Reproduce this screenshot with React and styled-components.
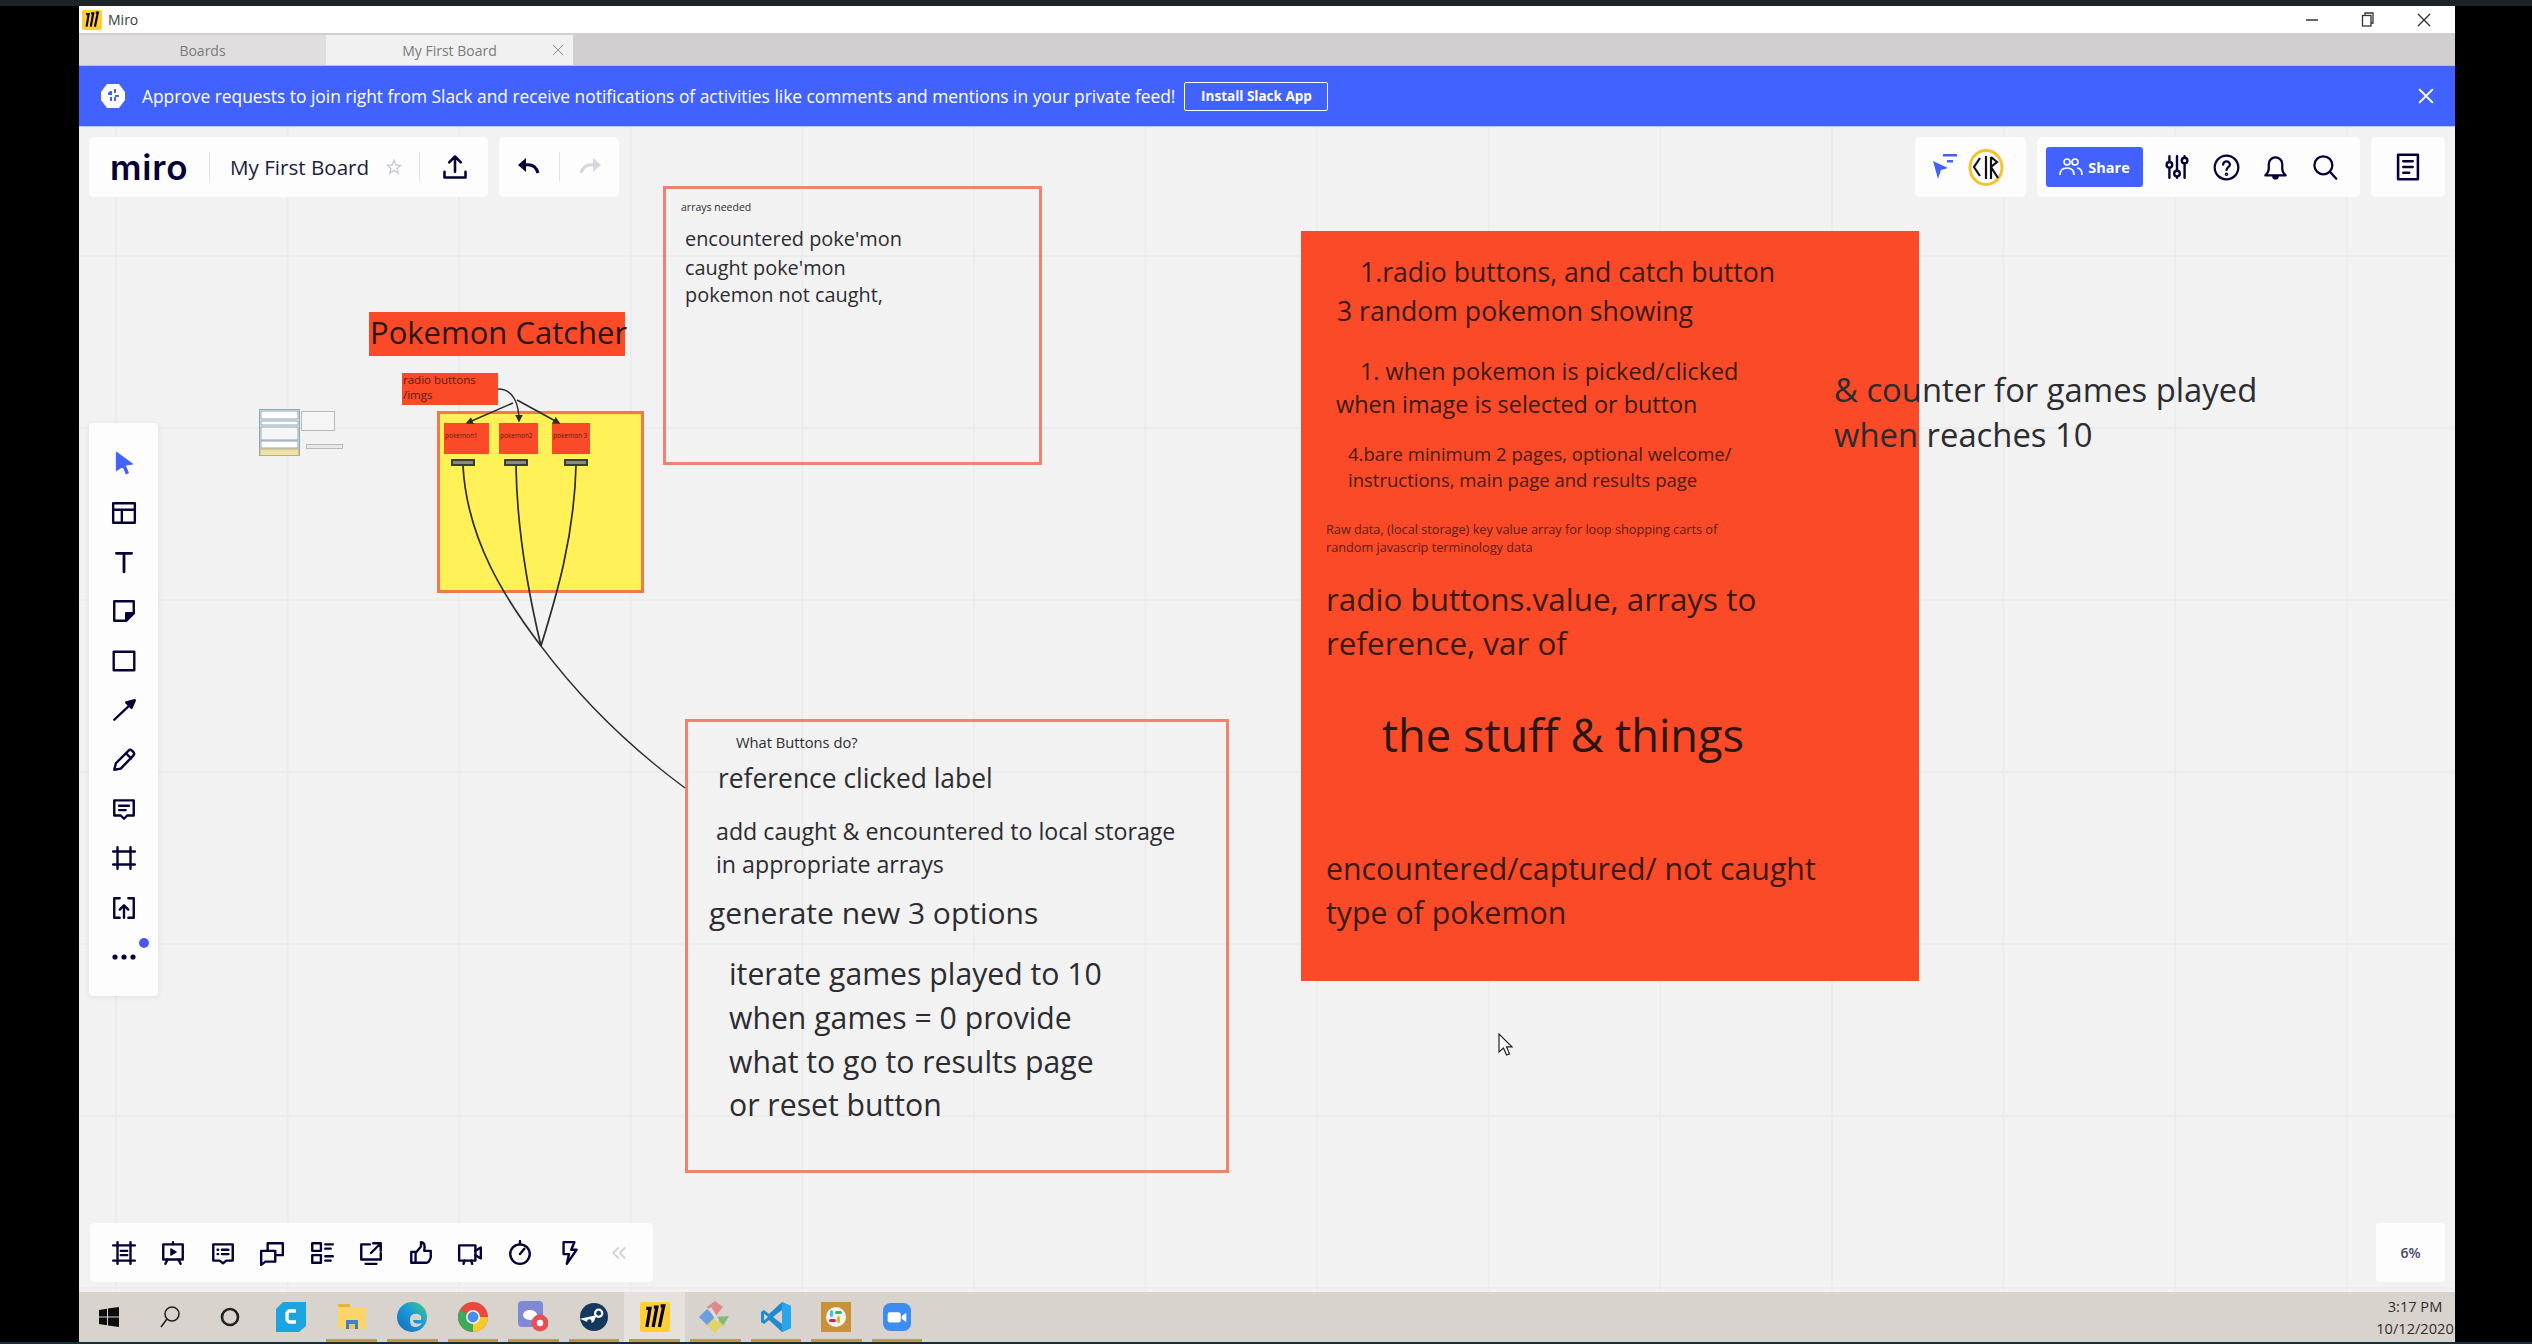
import React from "react";
import styled, { createGlobalStyle } from "styled-components";

const ORIGIN_X = 79;
const ORIGIN_Y = 127;
const INK = "#050038";
const FONT = '"Open Sans", "Liberation Sans", sans-serif';

const Global = createGlobalStyle`
  html, body { margin: 0; padding: 0; background: #000; overflow: hidden; }
  * { box-sizing: border-box; }
  body { font-family: ${FONT}; }
`;

const Page = styled.div`
  width: 2532px; height: 1344px; background: #000;
  display: flex; flex-direction: column; overflow: hidden;
`;
const TopStrip = styled.div`height: 6px; background: #202326; flex: none;`;
const BottomStrip = styled.div`
  height: 2px; flex: none; background: #12303c; margin-top: 0;
`;
const Window = styled.div`
  width: 2376px; margin-left: 79px; height: 1336px;
  display: flex; flex-direction: column; flex: none; background: #fff;
`;
const TitleBar = styled.div`
  height: 29px; background: #fff; flex: none; display: flex; align-items: center;
  padding-left: 3px; border-bottom: 2px solid #cfcfcf; position: relative;
`;
const AppName = styled.span`
  font-size: 14px; color: #3a3a3a; margin-left: 6px;
`;
const WinControls = styled.div`
  margin-left: auto; display: flex; align-items: center; gap: 42px; padding-right: 24px;
`;
const TabBar = styled.div`
  height: 31px; background: #d1cfd0; flex: none; display: flex;
  border-bottom: 1px solid #b9bdd0;
`;
const Tab = styled.div`
  width: ${(p) => p.$w}px; display: flex; align-items: center; justify-content: center;
  position: relative; font-size: 14px; color: #7a7a7a;
  background: ${(p) => (p.$active ? "#f1f1f2" : "#e0dedf")};
`;
const TabClose = styled.span`
  position: absolute; right: 8px; top: 9px; width: 13px; height: 13px; display: flex;
`;
const Banner = styled.div`
  height: 61px; background: #4262ff; flex: none; display: flex; align-items: center;
  padding-left: 22px; color: #fff; border-bottom: 1px solid #b8c4f5;
`;
const BannerText = styled.span`
  font-size: 17.38px; font-weight: 500; margin-left: 17px; white-space: nowrap;
`;
const InstallButton = styled.div`
  margin-left: 9px; height: 29px; width: 144px; border: 1.5px solid #fff; border-radius: 2px;
  display: flex; align-items: center; justify-content: center; font-size: 13.5px; font-weight: 700;
`;
const BannerClose = styled.span`margin-left: auto; margin-right: 21px; display: flex;`;

const Canvas = styled.div`
  flex: 1; position: relative; overflow: hidden;
  background-color: #f2f2f3;
  background-image:
    linear-gradient(to right, #ececee 2px, transparent 2px),
    linear-gradient(to bottom, #ececee 2px, transparent 2px);
  background-size: 171.6px 172px;
  background-position: 36px 128px;
`;
const Frame = styled.div`
  position: absolute;
  left: ${(p) => p.$x - ORIGIN_X}px; top: ${(p) => p.$y - ORIGIN_Y}px;
  width: ${(p) => p.$w}px; height: ${(p) => p.$h}px;
  background: ${(p) => p.$bg || "transparent"};
  border: ${(p) => (p.$border ? `${p.$bw || 3}px solid ${p.$border}` : "none")};
`;
const Scribble = styled.div`
  position: absolute; white-space: nowrap;
  left: ${(p) => p.$x - ORIGIN_X}px; top: ${(p) => p.$cy - ORIGIN_Y - p.$lh / 2 - 2}px;
  font-size: ${(p) => p.$size}px; line-height: ${(p) => p.$lh}px;
  color: ${(p) => p.$color || "#2c2c30"};
`;
const Wires = styled.svg`position: absolute; left: 0; top: 0; overflow: visible;`;

const Panel = styled.div`
  height: 60px; background: #fdfdfe; border-radius: 5px; display: flex; align-items: center;
  width: ${(p) => p.$w}px; padding-left: ${(p) => p.$pad || 0}px;
`;
const TopLeft = styled.div`position: absolute; left: 10px; top: 10px; display: flex; gap: 11px;`;
const TopRight = styled.div`position: absolute; left: 1836px; top: 10px; display: flex; gap: 11px;`;
const Logo = styled.span`
  font-family: Inter, "Liberation Sans", sans-serif; font-size: 35px; font-weight: 600;
  color: ${INK}; width: 78px; letter-spacing: 0.8px; line-height: 1;
`;
const Divider = styled.span`
  width: 1px; height: 30px; background: #e4e4e8; margin: 0 ${(p) => p.$r}px 0 ${(p) => p.$l}px; flex: none;
`;
const BoardName = styled.span`
  font-size: 20.6px; font-weight: 500; color: #1c1c3a; width: 155px; margin-left: -1px; white-space: nowrap;
`;
const Slot = styled.span`
  width: ${(p) => p.$w}px; height: ${(p) => p.$h || 49.4}px; display: flex;
  align-items: center; justify-content: center; flex: none; position: relative;
`;
const ShareButton = styled.div`
  width: 97px; height: 40px; background: #4262ff; border-radius: 3px; color: #fff;
  font-size: 14.5px; font-weight: 700; display: flex; align-items: center; justify-content: center; gap: 5px;
  margin-right: 9px;
`;
const LeftTools = styled.div`
  position: absolute; left: 10px; top: 296px; width: 69px; height: 573px;
  background: #fdfdfe; border-radius: 4px; box-shadow: 0 1px 6px rgba(5,0,56,.08);
  display: flex; flex-direction: column; align-items: center; padding-top: 15.5px;
`;
const Dot = styled.span`
  position: absolute; left: 50px; top: 6px; width: 10px; height: 10px; border-radius: 50%; background: #4a58f5;
`;
const BottomTools = styled.div`
  position: absolute; left: 11px; top: 1096px; width: 563px; height: 59px;
  background: #fdfdfe; border-radius: 5px; display: flex; align-items: center; padding-left: 9px;
`;
const Zoom = styled.div`
  position: absolute; left: 2297px; top: 1096px; width: 69px; height: 59px; background: #fdfdfe;
  border-radius: 4px; display: flex; align-items: center; justify-content: center;
  font-size: 14px; font-weight: 600; color: #47476a;
`;
const Pointer = styled.svg`
  position: absolute; left: ${1498 - ORIGIN_X}px; top: ${1033 - ORIGIN_Y}px;
`;
const Taskbar = styled.div`
  height: 50px; background: #d8d3cd; flex: none; display: flex; position: relative;
`;
const TaskCell = styled.div`
  width: 60.6px; height: 50px; display: flex; align-items: center; justify-content: center; flex: none;
  position: relative;
  background: ${(p) => (p.$current ? "#e6e1dc" : "transparent")};
  ${(p) => p.$running && `&::after{content:"";position:absolute;left:5px;right:5px;bottom:0;height:3px;background:#c2974a;}`}
`;
const Clock = styled.div`
  margin-left: auto; width: 80px; display: flex; flex-direction: column; align-items: center;
  justify-content: center; gap: 4px; font-size: 14.6px; color: #2e2e2e; line-height: 18px; white-space: nowrap;
`;

/* ---------- icons ---------- */
const Ic = ({ s = 26, w = 2.2, c = INK, children, vb = "0 0 24 24" }) => (
  <svg width={s} height={s} viewBox={vb} fill="none" stroke={c} strokeWidth={w} strokeLinecap="round" strokeLinejoin="round">
    {children}
  </svg>
);
const XMark = ({ s = 14, c = "#333", w = 1.4 }) => (
  <svg width={s} height={s} viewBox="0 0 14 14" stroke={c} strokeWidth={w}><path d="M1 1l12 12M13 1L1 13" /></svg>
);
const MiroMark = ({ s = 20 }) => (
  <svg width={s} height={s} viewBox="0 0 24 24">
    <rect width="24" height="24" rx="2" fill="#ffd02f" />
    <g stroke="#050038" strokeWidth="2.6" fill="none" strokeLinecap="butt">
      <path d="M5 5h3l-2.5 15" />
      <path d="M11 4h2.5L10.5 20" />
      <path d="M16.5 3h2.5L15.5 20" />
    </g>
  </svg>
);

const tools = [
  <Ic key="a"><path d="M5 2l15 11-7 1 3 7-2 1-3-7-6 4z" fill="#4262ff" stroke="#4262ff" strokeWidth="1" /></Ic>,
  <Ic key="b"><rect x="2" y="3" width="20" height="18" /><path d="M2 9h20M10 9v12" /></Ic>,
  <Ic key="c"><path d="M5 4h14M12 4v17" strokeWidth="2.6" /></Ic>,
  <Ic key="d"><path d="M3 3h18v11l-7 7H3z" /><path d="M21 14h-7v7z" fill={INK} /></Ic>,
  <Ic key="e"><rect x="2.5" y="3.5" width="19" height="17" /></Ic>,
  <Ic key="f"><path d="M3 21L20 5" /><path d="M22 3l-8 2 5 5z" fill={INK} /></Ic>,
  <Ic key="g"><path d="M3 21l1.5-6L16 3.5a2.5 2.5 0 013.5 0l1 1a2.5 2.5 0 010 3.5L9 20z" /><path d="M14 6l4.5 4.5" /></Ic>,
  <Ic key="h"><path d="M3 4h18v14h-6l-3 3-3-3H3z" /><path d="M7.5 9h9M7.5 13h6" /></Ic>,
  <Ic key="i"><path d="M2 6h20M2 18h20M6 2v20M18 2v20" /></Ic>,
  <Ic key="j"><path d="M8 3H3v18h5M16 3h5v18h-5M12 21V10M8 13.5L12 9.5l4 4" /></Ic>,
];

const bottomTools = [
  <Ic key="1"><path d="M2 5h20M2 19h20M6 2v20M18 2v20M9 10h6M9 14h6" /></Ic>,
  <Ic key="2"><rect x="3" y="4" width="18" height="14" /><path d="M12 2v2M7 18l-2 4M17 18l2 4" /><path d="M10 8l5 3-5 3z" fill={INK} strokeWidth="1" /></Ic>,
  <Ic key="3"><path d="M3 4h18v15h-6l-3 2.5L9 19H3z" /><path d="M7 9h.5M11 9h6M7 13h.5M11 13h6" /></Ic>,
  <Ic key="4"><path d="M2 10h13v10H6l-4 3zM8 10V3h14v11h-6" /></Ic>,
  <Ic key="5"><rect x="3" y="3" width="8" height="7" /><rect x="3" y="14" width="8" height="7" /><path d="M15 4h7M15 8h5M15 15h7M15 19h5" /></Ic>,
  <Ic key="6"><path d="M11 4H3v14h18v-6M7 22h10M14 3h7v7M21 3l-9 9" /></Ic>,
  <Ic key="7"><path d="M3 11h4v10H3zM7 12l5-6V2c3 0 4 3 3 8h6v6c-1 3-2 5-4 5H7" /></Ic>,
  <Ic key="8"><rect x="2" y="5" width="15" height="14" /><path d="M17 10l5-3v10l-5-3M7 19l-1 3M13 19l1 3" /></Ic>,
  <Ic key="9"><circle cx="12" cy="13" r="9" /><path d="M12 1v3M12 13l4-5" /></Ic>,
  <Ic key="10"><path d="M7 2h10l-3 7h5L10 22l2-9H7z" /></Ic>,
  <Ic key="11" c="#d3d3dc" s={20}><path d="M11 6l-6 6 6 6M19 6l-6 6 6 6" /></Ic>,
];

const taskIcons = [
  <svg key="w" width="20" height="20" viewBox="0 0 20 20" fill="#0c0c0c"><path d="M0 3l8-1.2V9.5H0zM9 1.6L20 0v9.5H9zM0 10.5h8v7.8L0 17zM9 10.5h11V20L9 18.4z" /></svg>,
  <svg key="s" width="22" height="24" viewBox="0 0 22 24" fill="none" stroke="#222" strokeWidth="1.6"><circle cx="13" cy="9" r="7" /><path d="M8 14l-6 8" /></svg>,
  <svg key="c" width="20" height="20" viewBox="0 0 20 20" fill="none" stroke="#222" strokeWidth="2.6"><circle cx="10" cy="10" r="8" /></svg>,
  <svg key="ca" width="30" height="30" viewBox="0 0 30 30"><path d="M7 0h23v24l-7 6H0V7z" fill="#1ba5e0" /><path d="M20 9h-6a3 3 0 00-3 3v5a3 3 0 003 3h6" stroke="#fff" strokeWidth="3.4" fill="none" /></svg>,
  <svg key="f" width="28" height="28" viewBox="0 0 28 28"><rect x="0" y="1" width="12" height="4" fill="#e8b13c" /><rect x="0" y="4" width="28" height="22" fill="#fbd568" /><rect x="8" y="17" width="12" height="9" fill="#3d82c4" /><rect x="11" y="21" width="6" height="5" fill="#e8c46a" /></svg>,
  <svg key="e" width="30" height="30" viewBox="0 0 30 30">
    <defs><linearGradient id="edge" x1="0" y1="1" x2="1" y2="0"><stop offset="0" stopColor="#1468b8" /><stop offset=".55" stopColor="#1c9ad6" /><stop offset="1" stopColor="#3ecf7e" /></linearGradient></defs>
    <circle cx="15" cy="15" r="15" fill="url(#edge)" />
    <path d="M13 17c0-4 4-6 8-5 3 1 4 3 3 6h-8c0 3 4 5 9 3-2 4-7 5-10 3-1.500-1-2-4-2-7z" fill="#d8d3cd" />
  </svg>,
  <svg key="ch" width="30" height="30" viewBox="0 0 30 30"><circle cx="15" cy="15" r="15" fill="#e9483d" /><path d="M15 15L2 7.5A15 15 0 0015 30z" fill="#3fa85a" /><path d="M15 15h15A15 15 0 0115 30z" fill="#f8c92f" /><circle cx="15" cy="15" r="7" fill="#f5f5f5" /><circle cx="15" cy="15" r="5.4" fill="#4a8ee8" /></svg>,
  <svg key="d" width="30" height="32" viewBox="0 0 30 32"><rect x="0" y="0" width="25" height="26" rx="4" fill="#8089d4" /><ellipse cx="12" cy="14" rx="7" ry="5" fill="#fff" /><circle cx="22" cy="22" r="8.5" fill="#ea4f55" /><circle cx="22" cy="22" r="3.2" fill="#fff" /></svg>,
  <svg key="st" width="28" height="30" viewBox="0 0 30 30"><circle cx="15" cy="15" r="15" fill="#15385e" /><path d="M0 17l9 4a5 5 0 007-5l6-4" fill="#fff" /><circle cx="20" cy="11" r="5" fill="#fff" /><circle cx="20" cy="11" r="2.6" fill="#15385e" /><circle cx="10" cy="20" r="2.5" fill="#15385e" /></svg>,
  <MiroMark key="m" s={30} />,
  <svg key="k" width="32" height="32" viewBox="0 0 32 32"><path d="M16 16L8 6l8-6 8 6z" fill="#e08a8e" /><path d="M16 16l14-1-6 10-8-3z" fill="#86b878" /><path d="M16 16l8 8-8 8-8-8z" fill="#dfd36a" /><path d="M16 16L8 24 0 16 8 8z" fill="#6b9fe0" /><path d="M11 7l8 13" stroke="#ddd" strokeWidth="3" /></svg>,
  <svg key="v" width="30" height="30" viewBox="0 0 30 30"><path d="M21 0l9 4v22l-9 4L8 18l-5 4-3-2V10l3-2 5 4z" fill="#1f8ad2" /><path d="M21 0l9 4v22l-9 4z" fill="#2aa4ea" /><path d="M21 8L12 15l9 7z" fill="#d8d3cd" /><path d="M3 11.5L7 15l-4 3.5z" fill="#d8d3cd" /></svg>,
  <svg key="sl" width="30" height="30" viewBox="0 0 30 30"><rect width="30" height="30" fill="#c8923a" /><circle cx="15" cy="15" r="10" fill="#f7f2ea" /><rect x="9" y="8" width="3" height="7" rx="1.5" fill="#36c5f0" /><rect x="14" y="9" width="7" height="3" rx="1.5" fill="#2eb67d" /><rect x="16" y="14" width="3" height="7" rx="1.5" fill="#ecb22e" /><rect x="8" y="17" width="7" height="3" rx="1.5" fill="#e01e5a" /></svg>,
  <svg key="z" width="28" height="28" viewBox="0 0 30 30"><rect width="30" height="30" rx="8" fill="#3d8cf2" /><rect x="5" y="10" width="14" height="11" rx="2.5" fill="#fff" /><path d="M20 14l5-3.5v10L20 17z" fill="#fff" /></svg>,
];

/* ---------- canvas data ---------- */
const notes = [
  { x: 681, cy: 209, size: 10.5, lh: 14, text: "arrays needed" },
  { x: 685, cy: 241, size: 19.9, lh: 28, text: "encountered poke'mon" },
  { x: 685, cy: 270, size: 19.9, lh: 28, text: "caught poke'mon" },
  { x: 685, cy: 297, size: 19.9, lh: 28, text: "pokemon not caught," },
  { x: 370, cy: 334, size: 31, lh: 42, text: "Pokemon Catcher", color: "#2a1712" },
  { x: 403, cy: 382, size: 11.5, lh: 14, text: "radio buttons", color: "#5a2015" },
  { x: 403, cy: 397, size: 11.5, lh: 14, text: "/imgs", color: "#5a2015" },
  { x: 445, cy: 438, size: 6.5, lh: 10, text: "pokemon1", color: "#5a2015" },
  { x: 500, cy: 438, size: 6.5, lh: 10, text: "pokemon2", color: "#5a2015" },
  { x: 553, cy: 438, size: 6.5, lh: 10, text: "pokemon 3", color: "#5a2015" },
  { x: 736, cy: 744, size: 14.7, lh: 18, text: "What Buttons do?" },
  { x: 718, cy: 780, size: 26.4, lh: 34, text: "reference clicked label" },
  { x: 716, cy: 833, size: 23.2, lh: 33, text: "add caught & encountered to local storage" },
  { x: 716, cy: 866, size: 23.2, lh: 33, text: "in appropriate arrays" },
  { x: 709, cy: 915, size: 30, lh: 40, text: "generate new 3 options" },
  { x: 729, cy: 975, size: 30.2, lh: 43, text: "iterate games played to 10" },
  { x: 729, cy: 1019, size: 30.2, lh: 43, text: "when games = 0 provide" },
  { x: 729, cy: 1063, size: 30.2, lh: 43, text: "what to go to results page" },
  { x: 729, cy: 1106, size: 30.2, lh: 43, text: "or reset button" },
  { x: 1360, cy: 274, size: 26.6, lh: 38, text: "1.radio buttons, and catch button", color: "#3a1a12" },
  { x: 1337, cy: 313, size: 26.6, lh: 38, text: "3 random pokemon showing", color: "#3a1a12" },
  { x: 1360, cy: 373, size: 23.4, lh: 34, text: "1. when pokemon is picked/clicked", color: "#3a1a12" },
  { x: 1336, cy: 406, size: 23.4, lh: 34, text: "when image is selected or button", color: "#3a1a12" },
  { x: 1348, cy: 455, size: 18.5, lh: 27, text: "4.bare minimum 2 pages, optional welcome/", color: "#4a1c12" },
  { x: 1348, cy: 481, size: 18.5, lh: 27, text: "instructions, main page and results page", color: "#4a1c12" },
  { x: 1326, cy: 531, size: 12.7, lh: 18, text: "Raw data, (local storage) key value array for loop shopping carts of", color: "#5a2015" },
  { x: 1326, cy: 549, size: 12.7, lh: 18, text: "random javascrip terminology data", color: "#5a2015" },
  { x: 1326, cy: 600, size: 31.4, lh: 43, text: "radio buttons.value, arrays to", color: "#3a1a12" },
  { x: 1326, cy: 644, size: 31.4, lh: 43, text: "reference, var of", color: "#3a1a12" },
  { x: 1382, cy: 737, size: 45.2, lh: 62, text: "the stuff & things", color: "#2a1712" },
  { x: 1326, cy: 870, size: 30.3, lh: 43, text: "encountered/captured/ not caught", color: "#3a1a12" },
  { x: 1326, cy: 914, size: 30.3, lh: 43, text: "type of pokemon", color: "#3a1a12" },
  { x: 1834, cy: 391, size: 32.8, lh: 45, text: "& counter for games played" },
  { x: 1834, cy: 436, size: 32.8, lh: 45, text: "when reaches 10" },
];

const shapes = [
  { x: 663, y: 186, w: 379, h: 279, border: "#f4806e" },
  { x: 369, y: 312, w: 256, h: 44, bg: "#fa4a28" },
  { x: 402, y: 373, w: 96, h: 32, bg: "#fa4a28" },
  { x: 437, y: 411, w: 207, h: 182, bg: "#fff157", border: "#f5774a" },
  { x: 444, y: 423, w: 45, h: 31, bg: "#fa4a28" },
  { x: 499, y: 423, w: 39, h: 31, bg: "#fa4a28" },
  { x: 552, y: 423, w: 38, h: 31, bg: "#fa4a28" },
  { x: 451, y: 459, w: 24, h: 7, bg: "#8a8a80", border: "#3c3c36", bw: 2 },
  { x: 504, y: 459, w: 24, h: 7, bg: "#8a8a80", border: "#3c3c36", bw: 2 },
  { x: 564, y: 459, w: 24, h: 7, bg: "#8a8a80", border: "#3c3c36", bw: 2 },
  { x: 685, y: 719, w: 544, h: 454, border: "#f4806e" },
  { x: 1301, y: 231, w: 618, h: 750, bg: "#fa4a28" },
];

export default function App() {
  return (
    <Page>
      <Global />
      <TopStrip />
      <Window>
        <TitleBar>
          <MiroMark s={20} />
          <AppName>Miro</AppName>
          <WinControls>
            <svg width="14" height="4" viewBox="0 0 14 4"><path d="M1 2h12" stroke="#444" strokeWidth="1.6" /></svg>
            <svg width="14" height="15" viewBox="0 0 14 15" fill="none" stroke="#333" strokeWidth="1.3"><path d="M4 3V1h8v10h-2" /><rect x="1.5" y="3.5" width="8.5" height="10.5" /></svg>
            <XMark s={14} />
          </WinControls>
        </TitleBar>
        <TabBar>
          <Tab $w={247}>Boards</Tab>
          <Tab $w={247} $active>
            My First Board
            <TabClose><XMark s={12} c="#8a8a8a" w={1.1} /></TabClose>
          </Tab>
        </TabBar>
        <Banner>
          <svg width="24" height="26" viewBox="0 0 24 26">
            <path d="M6 1h12l6 8v8l-6 8H6L0 17V9z" fill="#fff" />
            <path d="M9 8h2v4H7v-2zM13 6h2v4h-2zM14 12h4v2h-4zM9 14h2v4H9zM13 14h2v4h-2z" fill="#4262ff" />
          </svg>
          <BannerText>Approve requests to join right from Slack and receive notifications of activities like comments and mentions in your private feed!</BannerText>
          <InstallButton>Install Slack App</InstallButton>
          <BannerClose><XMark s={16} c="#fff" w={1.8} /></BannerClose>
        </Banner>
        <Canvas>
          {shapes.map((s, i) => (
            <Frame key={i} $x={s.x} $y={s.y} $w={s.w} $h={s.h} $bg={s.bg} $border={s.border} $bw={s.bw} />
          ))}
          <Wires width="2376" height="1170" viewBox={`${ORIGIN_X} ${ORIGIN_Y} 2376 1170`} fill="none" stroke="#2c2c2c" strokeWidth="1.5">
            <defs>
              <marker id="tip" markerWidth="5" markerHeight="5" refX="4" refY="2.5" orient="auto">
                <path d="M0 0l5 2.5L0 5z" fill="#2c2c2c" stroke="none" />
              </marker>
            </defs>
            <path d="M463 466C467 540 506 600 541 646" strokeWidth="1.7" />
            <path d="M516 466C517 530 530 600 541 646" strokeWidth="1.7" />
            <path d="M576 466C574 540 555 600 541 646" strokeWidth="1.7" />
            <path d="M541 646Q600 725 685 788" strokeWidth="1.3" />
            <path d="M498 389C514 389 519 405 519 421" markerEnd="url(#tip)" />
            <path d="M513 403L467 423" markerEnd="url(#tip)" />
            <path d="M517 400L559 423" markerEnd="url(#tip)" />
            <g strokeWidth="1" stroke="#8aa8b0">
              <rect x="259.5" y="409.5" width="40" height="46" />
              <rect x="261" y="411" width="37" height="8" fill="#fff" />
              <rect x="261" y="421" width="37" height="4" fill="#fff" />
              <rect x="261" y="427" width="37" height="13" fill="#f6f6f6" />
              <rect x="261" y="441" width="37" height="7" fill="#fff" />
            </g>
            <rect x="260" y="449" width="39" height="6.5" fill="#eee3a4" stroke="#b5b08a" strokeWidth="1" />
            <rect x="301.5" y="411.5" width="33" height="19" stroke="#b5b9bb" strokeWidth="1" fill="#f5f5f5" />
            <rect x="306.5" y="444.5" width="36" height="4" stroke="#b5b9bb" strokeWidth="1" fill="#e9e9e9" />
          </Wires>
          {notes.map((n, i) => (
            <Scribble key={i} $x={n.x} $cy={n.cy} $size={n.size} $lh={n.lh} $color={n.color}>{n.text}</Scribble>
          ))}

          <TopLeft>
            <Panel $w={399} $pad={21}>
              <Logo>miro</Logo>
              <Divider $l={21} $r={21} />
              <BoardName>My First Board</BoardName>
              <Slot $w={18} $h={24}>
                <svg width="16" height="16" viewBox="0 0 24 24" fill="none" stroke="#c9c9d4" strokeWidth="2"><path d="M12 2l3 7 7 .6-5.400 4.700 1.700 7L12 17l-6.300 4.300 1.700-7L2 9.600 9 9z" /></svg>
              </Slot>
              <Divider $l={16} $r={11} />
              <Slot $w={48} $h={40}>
                <Ic s={28}><path d="M12 3v13M7 8l5-5 5 5M3 16v5h18v-5" /></Ic>
              </Slot>
            </Panel>
            <Panel $w={120}>
              <Slot $w={60} $h={40}>
                <svg width="24" height="20" viewBox="0 0 24 20" fill="none"><path d="M1 8l8-7v14z" fill={INK} /><path d="M8 8c6-1 11 1 13 8" stroke={INK} strokeWidth="3" /></svg>
              </Slot>
              <Divider $l={0} $r={0} />
              <Slot $w={59} $h={40}>
                <svg width="24" height="20" viewBox="0 0 24 20" fill="none"><path d="M23 8l-8-7v14z" fill="#d6d6dc" /><path d="M16 8c-6-1-11 1-13 8" stroke="#d6d6dc" strokeWidth="3" /></svg>
              </Slot>
            </Panel>
          </TopLeft>

          <TopRight>
            <Panel $w={111} $pad={14}>
              <Slot $w={32} $h={40}>
                <svg width="28" height="30" viewBox="0 0 28 30" fill="#4262ff"><path d="M2 9l15 7-7 2-3 9z" /><rect x="12" y="2" width="14" height="2.500" /><rect x="16" y="8" width="6" height="2.500" /></svg>
              </Slot>
              <Slot $w={50} $h={40}>
                <svg width="36" height="37" viewBox="0 0 36 37" fill="none">
                  <ellipse cx="18" cy="18.500" rx="16" ry="17" fill="#fff" stroke="#f5c32c" strokeWidth="3" />
                  <path d="M12 9L6 18l6 9M18 7v23M23 8v22M23 8l6 5-6 5 7 11" stroke="#111" strokeWidth="2.200" />
                </svg>
              </Slot>
            </Panel>
            <Panel $w={323} $pad={9}>
              <ShareButton>
                <svg width="24" height="20" viewBox="0 0 24 20" fill="none" stroke="#fff" strokeWidth="1.700"><circle cx="8" cy="5" r="3" /><circle cx="16" cy="5" r="3" /><path d="M1 18c0-5 3-7 7-7s7 2 7 7M18 11c3 0 5 2 5 7" /></svg>
                Share
              </ShareButton>
              <Slot $w={50} $h={40}>
                <Ic s={26} w={2.2}><path d="M5 2v5M5 13v9M12 2v13M12 21v1M19 2v1M19 9v13" /><circle cx="5" cy="10" r="2.6" /><circle cx="12" cy="18" r="2.6" /><circle cx="19" cy="6" r="2.6" /></Ic>
              </Slot>
              <Slot $w={49} $h={40}>
                <Ic s={27} w={2}><circle cx="12" cy="12" r="10.5" /><path d="M9 9.5a3 3 0 116 0c0 2-3 2.400-3 4.800" /><circle cx="12" cy="18" r=".6" /></Ic>
              </Slot>
              <Slot $w={49} $h={40}>
                <Ic s={27} w={2}><path d="M3 19c2-2 3-3 3-6V9a6 6 0 0112 0v4c0 3 1 4 3 6z" /><path d="M10 19.500c0 3 4 3 4 0" fill={INK} /></Ic>
              </Slot>
              <Slot $w={49} $h={40}>
                <Ic s={27} w={2}><circle cx="11" cy="10" r="8" /><path d="M17 16l5.500 6" /></Ic>
              </Slot>
            </Panel>
            <Panel $w={74}>
              <Slot $w={74} $h={40}>
                <Ic s={28} w={2.2}><rect x="3.5" y="1.5" width="17" height="21" /><path d="M8 7h8M8 12h8M8 17h5" /></Ic>
              </Slot>
            </Panel>
          </TopRight>

          <LeftTools>
            {tools.map((t, i) => <Slot key={i} $w={69}>{t}</Slot>)}
            <Slot $w={69}>
              <svg width="24" height="6" viewBox="0 0 24 6" fill={INK}><circle cx="3" cy="3" r="2.6" /><circle cx="12" cy="3" r="2.6" /><circle cx="21" cy="3" r="2.6" /></svg>
              <Dot />
            </Slot>
          </LeftTools>

          <BottomTools>
            {bottomTools.map((t, i) => <Slot key={i} $w={49.5} $h={40}>{t}</Slot>)}
          </BottomTools>
          <Zoom>6%</Zoom>

          <Pointer width="16" height="24" viewBox="0 0 16 24">
            <path d="M1 1v18l4.500-4 3 7 3-1.200-3-7H14z" fill="#fff" stroke="#222" strokeWidth="1.2" />
          </Pointer>
        </Canvas>
        <Taskbar>
          {taskIcons.map((t, i) => (
            <TaskCell key={i} $running={i >= 4} $current={i === 9}>{t}</TaskCell>
          ))}
          <Clock>
            <span>3:17 PM</span>
            <span>10/12/2020</span>
          </Clock>
        </Taskbar>
      </Window>
      <BottomStrip />
    </Page>
  );
}
